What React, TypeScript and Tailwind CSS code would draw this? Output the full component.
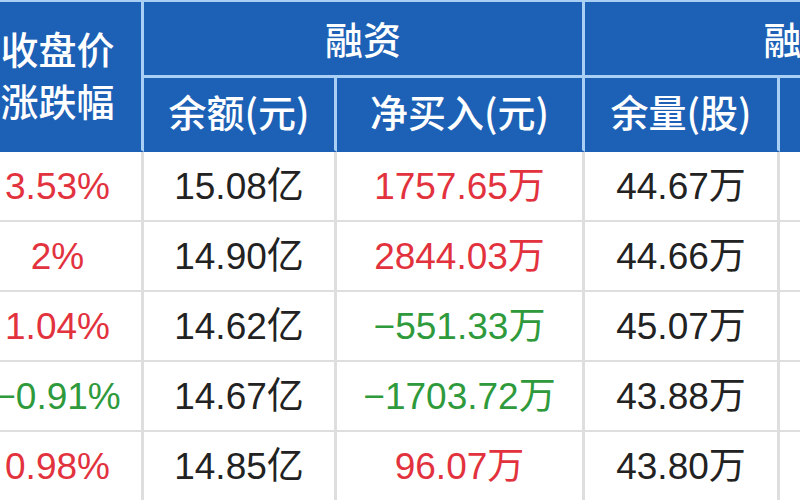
import React from "react"

type Row = {
  change: string
  changeUp: boolean
  balance: string
  netBuy: string
  netUp: boolean
  volume: string
}

const rows: Row[] = [
  { change: "3.53%", changeUp: true, balance: "15.08亿", netBuy: "1757.65万", netUp: true, volume: "44.67万" },
  { change: "2%", changeUp: true, balance: "14.90亿", netBuy: "2844.03万", netUp: true, volume: "44.66万" },
  { change: "1.04%", changeUp: true, balance: "14.62亿", netBuy: "−551.33万", netUp: false, volume: "45.07万" },
  { change: "−0.91%", changeUp: false, balance: "14.67亿", netBuy: "−1703.72万", netUp: false, volume: "43.88万" },
  { change: "0.98%", changeUp: true, balance: "14.85亿", netBuy: "96.07万", netUp: true, volume: "43.80万" },
]

const head = "bg-[#1d61b6] text-white font-medium border-[#a9d0f4] text-[38px] leading-none"
const cell = "border-r-[3px] border-b-[2px] border-[#dedede] text-center text-[37px] leading-none h-[70px] p-0"

export default function App() {
  return (
    <div
      className="w-[800px] h-[500px] overflow-hidden bg-white"
      style={{ fontFamily: '"Liberation Sans", "Noto Sans CJK SC", sans-serif' }}
    >
      <table className="-ml-[26px] table-fixed border-separate border-spacing-0 w-[1044px]">
        <colgroup>
          <col className="w-[170px]" />
          <col className="w-[193px]" />
          <col className="w-[248px]" />
          <col className="w-[195px]" />
          <col className="w-[238px]" />
        </colgroup>
        <thead style={{ fontFamily: '"Noto Sans CJK SC", sans-serif' }}>
          <tr>
            <th rowSpan={2} className={`${head} border-t-2 border-r-[3px] border-b-2 border-b-[#1d61b6]`}>
              <div className="leading-[52px] -mt-[4px]">收盘价<br />涨跌幅</div>
            </th>
            <th colSpan={2} className={`${head} border-t-2 border-r-[3px] border-b-[3px] h-[78px] pb-[2px]`}>
              融资
            </th>
            <th colSpan={2} className={`${head} border-t-2 border-b-[3px] h-[78px] pb-[2px]`}>
              融券
            </th>
          </tr>
          <tr>
            <th className={`${head} border-r-[3px] border-b-2 border-b-[#1d61b6] h-[74px] pb-[6px]`}>余额(元)</th>
            <th className={`${head} border-r-[3px] border-b-2 border-b-[#1d61b6] pb-[6px]`}>净买入(元)</th>
            <th className={`${head} border-r-[3px] border-b-2 border-b-[#1d61b6] pb-[6px]`}>余量(股)</th>
            <th className={`${head} border-b-2 border-b-[#1d61b6] pb-[6px]`}>余额(元)</th>
          </tr>
        </thead>
        <tbody>
          {rows.map((r) => (
            <tr key={r.balance}>
              <td className={`${cell} ${r.changeUp ? "text-[#e2323e]" : "text-[#2f9a3c]"}`}>{r.change}</td>
              <td className={`${cell} text-[#222]`}>{r.balance}</td>
              <td className={`${cell} ${r.netUp ? "text-[#e2323e]" : "text-[#2f9a3c]"}`}>{r.netBuy}</td>
              <td className={`${cell} text-[#222]`}>{r.volume}</td>
              <td className={`${cell} text-[#222]`}></td>
            </tr>
          ))}
        </tbody>
      </table>
    </div>
  )
}
